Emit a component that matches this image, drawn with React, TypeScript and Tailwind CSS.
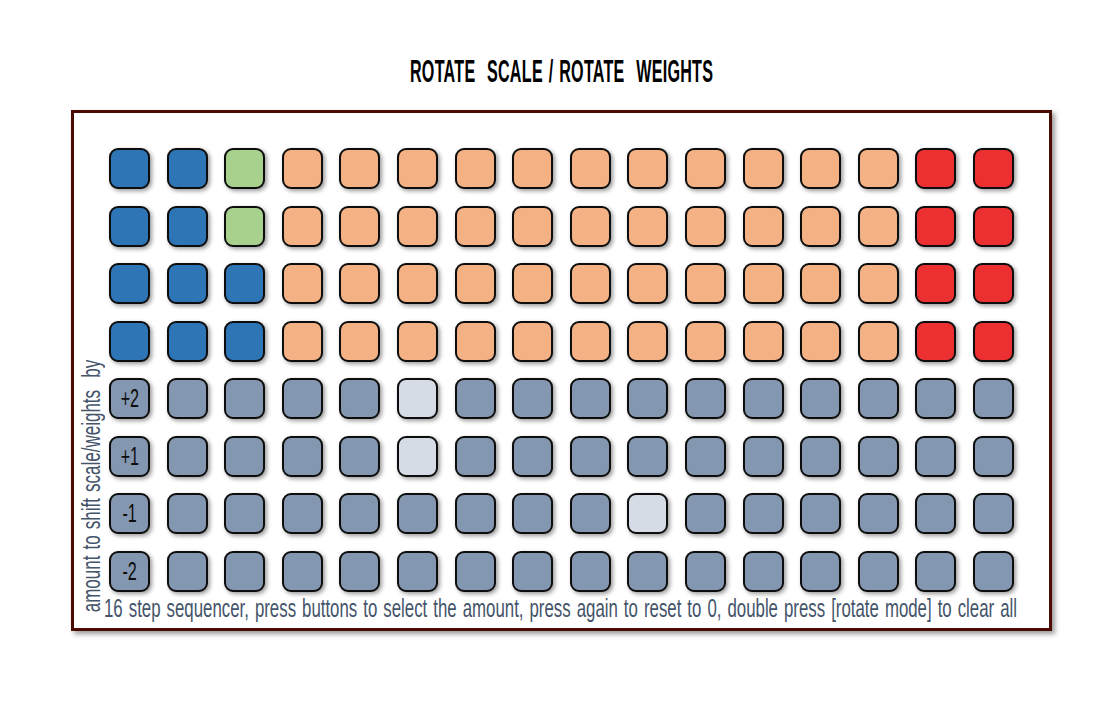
import React from 'react';

type Cell = 'blue' | 'green' | 'orange' | 'red' | 'slate' | 'light';

const cellClass: Record<Cell, string> = {
  blue: 'bg-[#2e75b6]',
  green: 'bg-[#a9d18e]',
  orange: 'bg-[#f4b183]',
  red: 'bg-[#ec3031]',
  slate: 'bg-[#8497b0]',
  light: 'bg-[#d6dce5]',
};

const scaleRow = (third: Cell): Cell[] => [
  'blue', 'blue', third,
  ...Array<Cell>(11).fill('orange'),
  'red', 'red',
];

const amountRow = (lit: number): Cell[] =>
  Array.from({ length: 16 }, (_, i) => (i === lit ? 'light' : 'slate'));

const rows: Cell[][] = [
  scaleRow('green'),
  scaleRow('green'),
  scaleRow('blue'),
  scaleRow('blue'),
  amountRow(5),
  amountRow(5),
  amountRow(9),
  amountRow(-1),
];

const labels: Record<number, string> = { 4: '+2', 5: '+1', 6: '-1', 7: '-2' };

export default function App() {
  return (
    <div className="w-[1104px] h-[720px] bg-white font-['Liberation_Sans_Narrow','Liberation_Sans',sans-serif] overflow-hidden">
      <div className="ml-[71px] w-[981px] h-[110px] pt-[55px] flex justify-center">
        <h1 className="text-[31px] leading-[34px] font-bold text-black whitespace-nowrap [word-spacing:2px] tracking-[0.5px] scale-x-[0.52]">
          ROTATE&nbsp; SCALE / ROTATE&nbsp; WEIGHTS
        </h1>
      </div>
      <div className="ml-[71px] w-[981px] h-[521px] border-[3px] border-[#4a0b00] shadow-[3px_3px_5px_rgba(0,0,0,0.4)] pt-[35px] flex flex-col">
        <div className="flex h-[444px]">
          <div className="w-[35px] -mb-[20px] flex flex-col justify-end items-end pr-[8px]">
            <div className="origin-bottom scale-y-[0.68]">
              <span className="block [writing-mode:vertical-rl] rotate-180 text-[25px] leading-[20px] text-[#44546a] whitespace-nowrap [word-spacing:2px]">
                amount to shift scale/weights&nbsp; by
              </span>
            </div>
          </div>
          <div className="w-[905px] h-[444px] flex flex-col justify-between">
            {rows.map((row, r) => (
              <div key={r} className="flex justify-between">
                {row.map((cell, c) => (
                  <div
                    key={c}
                    className={`w-[41px] h-[41px] rounded-[9px] border-2 border-[#0d0d0d] shadow-[2px_2px_4px_rgba(0,0,0,0.4)] flex items-center justify-center text-[26px] text-[#0d0d0d] ${cellClass[cell]}`}
                  >
                    {c === 0 && labels[r] && <span className="scale-x-[0.62]">{labels[r]}</span>}
                  </div>
                ))}
              </div>
            ))}
          </div>
        </div>
        <div className="pl-[30px] w-[975px] mt-[3px]">
          <p className="text-[25px] leading-[26px] text-[#44546a] whitespace-nowrap [word-spacing:2px] origin-left scale-x-[0.673]">
            16 step sequencer, press buttons to select the amount, press again to reset to 0, double press [rotate mode] to clear all
          </p>
        </div>
      </div>
    </div>
  );
}
